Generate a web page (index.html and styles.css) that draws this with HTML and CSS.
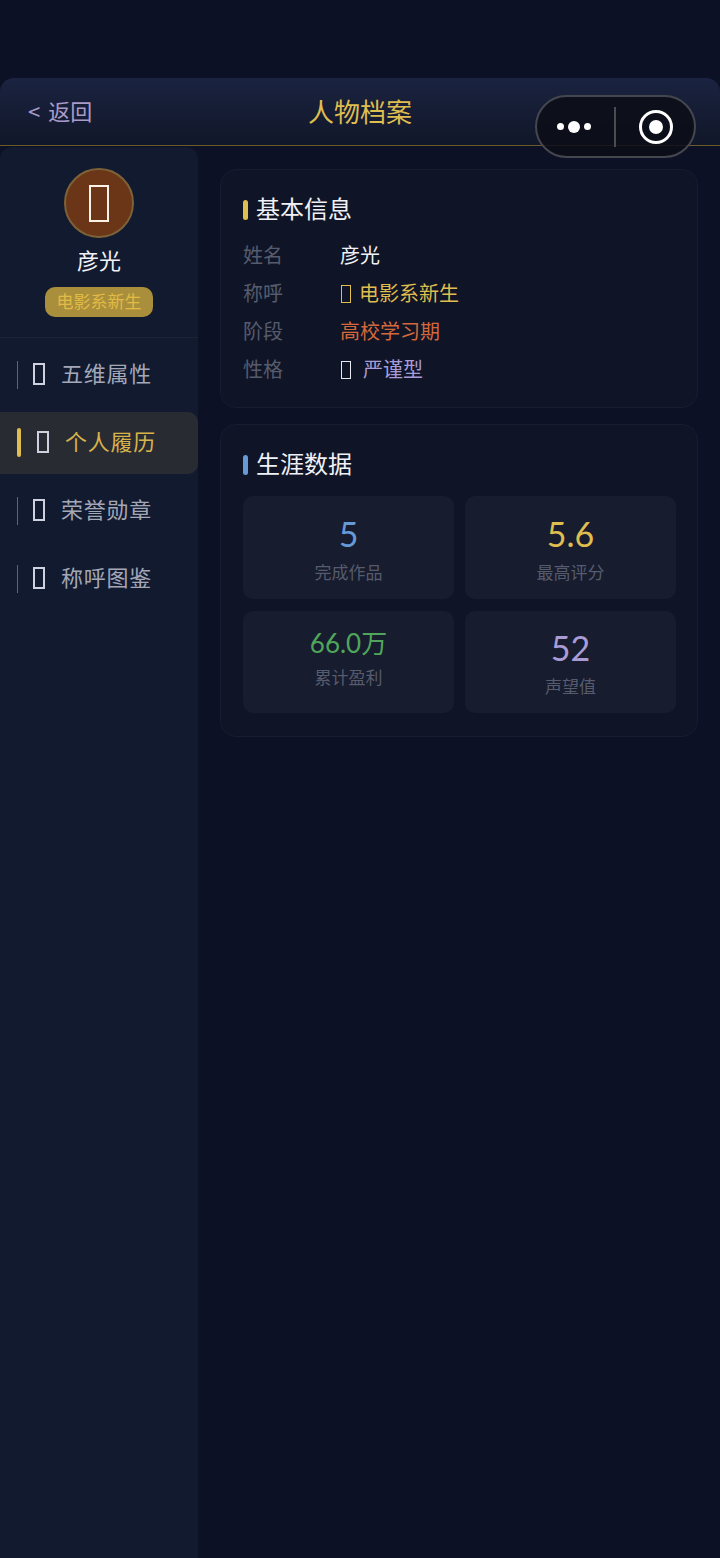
FILE: index.html
```html
<!DOCTYPE html>
<html lang="zh-CN">
<head>
    <meta charset="UTF-8">
    <meta name="viewport" content="width=device-width, initial-scale=1.0">
    <title>人物档案</title>
    <link rel="stylesheet" href="styles.css">
</head>
<body>
    <div class="page">
        <div class="header">
            <div class="back">&lt; 返回</div>
            <div class="header-title">人物档案</div>
        </div>

        <div class="capsule">
            <div class="capsule-dots">
                <span class="dot"></span>
                <span class="dot dot-big"></span>
                <span class="dot"></span>
            </div>
            <div class="capsule-line"></div>
            <div class="capsule-target"><span></span></div>
        </div>

        <div class="main">
            <div class="sidebar">
                <div class="profile">
                    <div class="avatar"><span class="tofu tofu-avatar"></span></div>
                    <div class="profile-name">彦光</div>
                    <div class="profile-tag">电影系新生</div>
                </div>
                <div class="nav">
                    <div class="nav-item">
                        <span class="nav-bar"></span>
                        <span class="tofu tofu-nav"></span>
                        <span class="nav-text">五维属性</span>
                    </div>
                    <div class="nav-item active">
                        <span class="nav-bar"></span>
                        <span class="tofu tofu-nav"></span>
                        <span class="nav-text">个人履历</span>
                    </div>
                    <div class="nav-item">
                        <span class="nav-bar"></span>
                        <span class="tofu tofu-nav"></span>
                        <span class="nav-text">荣誉勋章</span>
                    </div>
                    <div class="nav-item">
                        <span class="nav-bar"></span>
                        <span class="tofu tofu-nav"></span>
                        <span class="nav-text">称呼图鉴</span>
                    </div>
                </div>
            </div>

            <div class="content">
                <div class="card card-info">
                    <div class="card-title"><span class="title-mark mark-gold"></span>基本信息</div>
                    <div class="info-row">
                        <span class="info-label">姓名</span>
                        <span class="info-value">彦光</span>
                    </div>
                    <div class="info-row">
                        <span class="info-label">称呼</span>
                        <span class="info-value gold"><span class="tofu tofu-small"></span>电影系新生</span>
                    </div>
                    <div class="info-row">
                        <span class="info-label">阶段</span>
                        <span class="info-value orange">高校学习期</span>
                    </div>
                    <div class="info-row">
                        <span class="info-label">性格</span>
                        <span class="info-value purple"><span class="tofu tofu-small tofu-white"></span>严谨型</span>
                    </div>
                </div>

                <div class="card card-stats">
                    <div class="card-title"><span class="title-mark mark-blue"></span>生涯数据</div>
                    <div class="stats-grid">
                        <div class="stat">
                            <div class="stat-num blue">5</div>
                            <div class="stat-label">完成作品</div>
                        </div>
                        <div class="stat">
                            <div class="stat-num gold">5.6</div>
                            <div class="stat-label">最高评分</div>
                        </div>
                        <div class="stat stat-tight">
                            <div class="stat-num green">66.0万</div>
                            <div class="stat-label">累计盈利</div>
                        </div>
                        <div class="stat stat-low">
                            <div class="stat-num lilac">52</div>
                            <div class="stat-label">声望值</div>
                        </div>
                    </div>
                </div>
            </div>
        </div>
    </div>
</body>
</html>
```

FILE: styles.css
```css
* {
    box-sizing: border-box;
}

body {
    margin: 0;
    background-color: #0c1125;
    font-family: "Noto Sans CJK SC", "Noto Sans", sans-serif;
    color: #fff;
}

.page {
    position: relative;
    width: 720px;
    height: 1558px;
    padding-top: 78px;
    overflow: hidden;
}

.header {
    height: 68px;
    padding: 0 28px;
    display: flex;
    align-items: center;
    justify-content: center;
    position: relative;
    background: linear-gradient(180deg, #1a2340 0%, #111729 100%);
    border-radius: 14px 14px 0 0;
    border-bottom: 1px solid #6b5a2a;
}

.back {
    position: absolute;
    left: 28px;
    top: 16px;
    font-size: 22px;
    line-height: 32px;
    word-spacing: 3px;
    color: #a89bc9;
}

.header-title {
    font-size: 26px;
    line-height: 36px;
    color: #dfbd4f;
    margin-top: -2px;
}

.capsule {
    position: absolute;
    left: 535px;
    top: 95px;
    width: 161px;
    height: 63px;
    border: 2px solid #45474f;
    border-radius: 32px;
    background-color: rgba(12, 13, 22, 0.85);
    display: flex;
    align-items: center;
}

.capsule-dots {
    width: 73px;
    margin-right: 4px;
    display: flex;
    align-items: center;
    justify-content: center;
    gap: 4px;
}

.dot {
    width: 7px;
    height: 7px;
    border-radius: 50%;
    background-color: #fff;
}

.dot-big {
    width: 12px;
    height: 12px;
}

.capsule-line {
    width: 2px;
    height: 40px;
    background-color: #4b4c52;
}

.capsule-target {
    flex: 1;
    padding-left: 2px;
    display: flex;
    align-items: center;
    justify-content: center;
}

.capsule-target span {
    width: 34px;
    height: 34px;
    border: 3px solid #fff;
    border-radius: 50%;
    position: relative;
    display: flex;
    align-items: center;
    justify-content: center;
}

.capsule-target span::after {
    content: "";
    width: 14px;
    height: 14px;
    border-radius: 50%;
    background-color: #fff;
}

.main {
    display: flex;
    height: 1412px;
}

.sidebar {
    width: 198px;
    flex-shrink: 0;
    margin-top: 1px;
    background-color: #121a30;
    border-radius: 12px 12px 0 0;
}

.profile {
    height: 191px;
    padding-top: 21px;
    display: flex;
    flex-direction: column;
    align-items: center;
    border-bottom: 1px solid #1d2438;
}

.avatar {
    width: 70px;
    height: 70px;
    border-radius: 50%;
    background-color: #6b3518;
    border: 2px solid #7d6237;
    display: flex;
    align-items: center;
    justify-content: center;
}

.profile-name {
    margin-top: 3px;
    font-size: 22px;
    line-height: 36px;
    color: #f2f2f6;
}

.profile-tag {
    margin-top: 10px;
    width: 108px;
    height: 30px;
    border-radius: 10px;
    background-color: #a98f3c;
    color: #e2bb45;
    font-size: 17px;
    line-height: 28px;
    text-align: center;
}

.nav {
    padding-top: 6px;
}

.nav-item {
    height: 62px;
    margin-bottom: 6px;
    padding-left: 17px;
    display: flex;
    align-items: center;
    border-radius: 0 10px 10px 0;
}

.nav-bar {
    width: 1px;
    height: 28px;
    background-color: #7a6528;
}

.nav-text {
    margin-left: 16px;
    padding-bottom: 6px;
    font-size: 22px;
    line-height: 32px;
    letter-spacing: 0.75px;
    color: #a3a7b6;
}

.nav-item .tofu-nav {
    margin-left: 15px;
    margin-top: -2px;
}

.nav-item.active {
    background-color: #292b33;
}

.nav-item.active .nav-bar {
    width: 4px;
    height: 29px;
    margin-top: -2px;
    border-radius: 2px;
    background-color: #dfbd4f;
}

.nav-item.active .tofu-nav {
    margin-left: 16px;
}

.nav-item.active .nav-text {
    margin-left: 16px;
    color: #d8b24a;
}

.tofu {
    display: inline-block;
    flex-shrink: 0;
    border: 1px solid currentColor;
}

.tofu-avatar {
    width: 20px;
    height: 37px;
    border: 2px solid #fbf1e6;
}

.tofu-nav {
    width: 12px;
    height: 22px;
    border: 2px solid #cfd2de;
}

.tofu-small {
    width: 10px;
    height: 18px;
    margin-left: 1px;
    margin-right: 8px;
    vertical-align: -2px;
}

.tofu-white {
    border-color: #e8e8f0;
    margin-right: 12px;
}

.content {
    flex: 1;
    padding: 23px 23px 0 22px;
    display: flex;
    flex-direction: column;
    gap: 16px;
}

.card {
    background-color: #0f1526;
    border: 1px solid #161d30;
    border-radius: 16px;
    padding: 20px 21px 0 22px;
}

.card-info {
    height: 239px;
}

.card-stats {
    height: 313px;
}

.card-title {
    display: flex;
    align-items: center;
    font-size: 24px;
    line-height: 36px;
    color: #f0f1f6;
}

.title-mark {
    width: 5px;
    height: 20px;
    margin-top: 4px;
    border-radius: 3px;
    margin-right: 8px;
}

.mark-gold {
    background-color: #dfbd4f;
}

.mark-blue {
    background-color: #659ad6;
}

.info-row {
    display: flex;
    height: 38px;
    align-items: center;
    font-size: 20px;
}

.card-title + .info-row {
    margin-top: 9px;
}

.info-label {
    width: 97px;
    color: #565b6d;
}

.info-value {
    color: #f0f1f6;
}

.gold {
    color: #dfbd4f;
}

.orange {
    color: #d4683a;
}

.purple {
    color: #a89bd9;
}

.blue {
    color: #659ad6;
}

.green {
    color: #4fa65b;
}

.lilac {
    color: #a99bd6;
}

.stats-grid {
    margin-top: 15px;
    display: grid;
    grid-template-columns: 211px 211px;
    grid-template-rows: 103px 102px;
    gap: 12px 11px;
}

.stat {
    background-color: #171c2e;
    border-radius: 10px;
    padding-top: 16px;
    text-align: center;
}

.stat-num {
    font-family: "Lato", "Noto Sans CJK SC", sans-serif;
    font-size: 34px;
    line-height: 44px;
}

.stat-label {
    margin-top: 4px;
    font-size: 17px;
    line-height: 24px;
    color: #565b6d;
}

.stat-tight {
    padding-top: 13px;
}

.stat-tight .stat-num {
    font-size: 26px;
    line-height: 38px;
}

.stat-tight .stat-label {
    margin-top: 3px;
}

.stat-low {
    padding-top: 15px;
}
```
